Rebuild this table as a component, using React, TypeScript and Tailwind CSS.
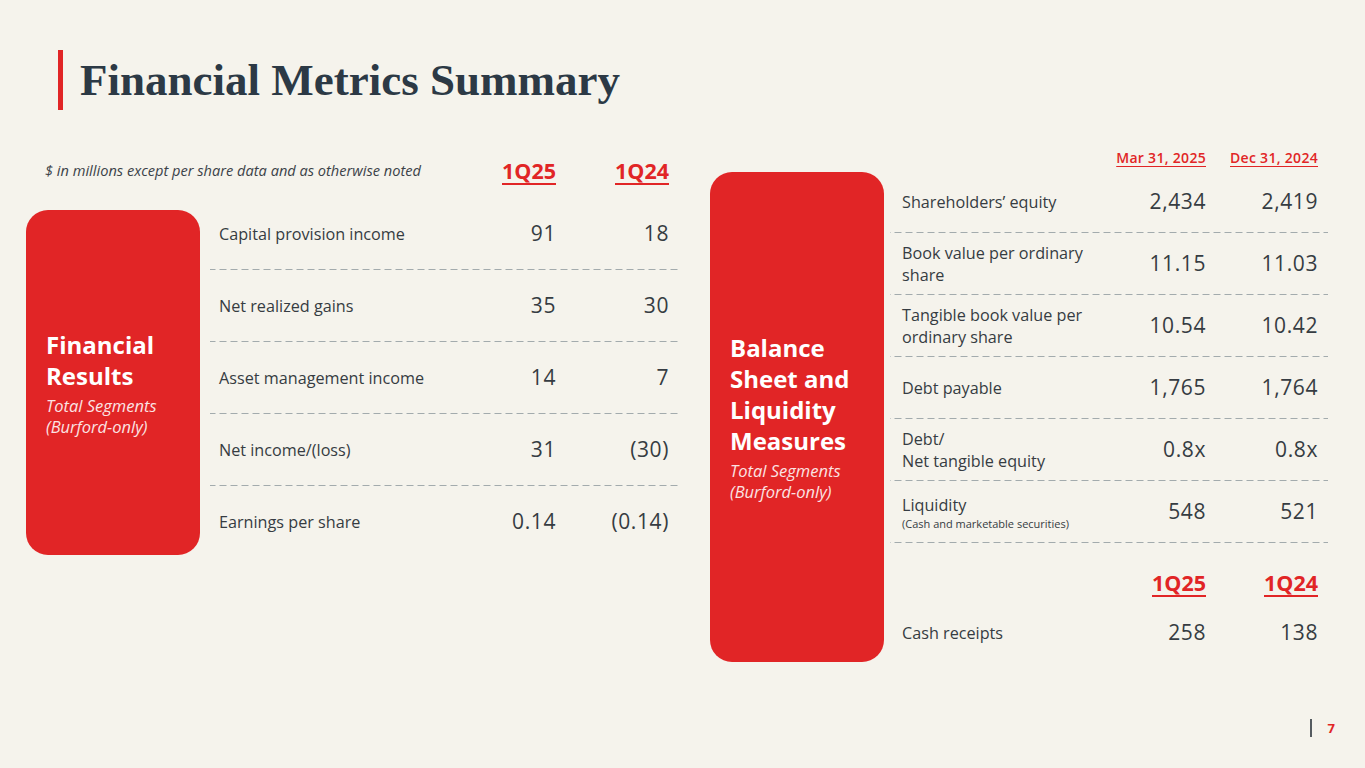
import React from "react";

type Row = { label: React.ReactNode; a: string; b: string };

const results: Row[] = [
  { label: "Capital provision income", a: "91", b: "18" },
  { label: "Net realized gains", a: "35", b: "30" },
  { label: "Asset management income", a: "14", b: "7" },
  { label: "Net income/(loss)", a: "31", b: "(30)" },
  { label: "Earnings per share", a: "0.14", b: "(0.14)" },
];

const balance: Row[] = [
  { label: "Shareholders’ equity", a: "2,434", b: "2,419" },
  { label: <>Book value per ordinary<br />share</>, a: "11.15", b: "11.03" },
  { label: <>Tangible book value per<br />ordinary share</>, a: "10.54", b: "10.42" },
  { label: "Debt payable", a: "1,765", b: "1,764" },
  { label: <>Debt/<br />Net tangible equity</>, a: "0.8x", b: "0.8x" },
  {
    label: (
      <>
        Liquidity
        <span className="block text-[11px] leading-[13px] mt-[1px]">(Cash and marketable securities)</span>
      </>
    ),
    a: "548",
    b: "521",
  },
];

const dash =
  "bg-[linear-gradient(to_right,#a3abad_62%,transparent_0)] bg-[length:11px_1.5px] bg-bottom bg-repeat-x";

const num = "text-right text-[21px] tracking-[0.6px]";
const label = "text-[16.2px] leading-[22px]";

function SideCard({ title, className }: { title: React.ReactNode; className: string }) {
  return (
    <div className={`w-[174px] shrink-0 rounded-[22px] bg-[#e12526] flex flex-col justify-center pl-[20px] text-white ${className}`}>
      <div className="text-[24px] font-bold leading-[31px]">{title}</div>
      <div className="italic text-[16.5px] leading-[21px] mt-[4px] text-[#fbe3e3]">
        Total Segments
        <br />
        (Burford-only)
      </div>
    </div>
  );
}

function PeriodHead({ a, b, small }: { a: string; b: string; small?: boolean }) {
  const cls = small
    ? "text-[14px] font-semibold underline underline-offset-[3px] decoration-[1px] tracking-[0.3px]"
    : "text-[21.5px] font-bold underline underline-offset-[4px] decoration-[2px]";
  return (
    <>
      <div className={`text-right text-[#e12526] ${cls}`}>{a}</div>
      <div className={`text-right text-[#e12526] ${cls}`}>{b}</div>
    </>
  );
}

export default function App() {
  return (
    <div
      className="w-[1365px] h-[768px] bg-[#f5f3ec] text-[#363c42] relative overflow-hidden"
      style={{ fontFamily: "'Open Sans', Lato, sans-serif" }}
    >
      <div className="pl-[58px] pt-[50px] flex items-center h-[110px]">
        <div className="w-[5px] h-[60px] bg-[#e12526]" />
        <h1
          className="ml-[17px] text-[45px] font-bold text-[#2c3945] leading-none"
          style={{ fontFamily: "'Liberation Serif', 'DejaVu Serif', serif" }}
        >
          Financial Metrics Summary
        </h1>
      </div>

      <div className="flex items-start pl-[26px] pt-[34px] gap-[30px]">
        {/* left block */}
        <div className="w-[654px]">
          <div className="h-[54px] grid grid-cols-[1fr_113px_113px] items-center pr-[11px]">
            <div className="italic text-[14.6px] pl-[19px] text-[#3b4248] whitespace-nowrap">
              $ in millions except per share data and as otherwise noted
            </div>
            <PeriodHead a="1Q25" b="1Q24" />
          </div>
          <div className="flex gap-[10px]">
            <SideCard title={<>Financial<br />Results</>} className="h-[345px] mt-[12px]" />
            <div className="flex-1">
              {results.map((r, i) => (
                <div
                  key={i}
                  className={`h-[72px] grid grid-cols-[1fr_113px_113px] items-center pl-[9px] pr-[11px] ${i < results.length - 1 ? dash : ""}`}
                >
                  <div className={label}>{r.label}</div>
                  <div className={num}>{r.a}</div>
                  <div className={num}>{r.b}</div>
                </div>
              ))}
            </div>
          </div>
        </div>

        {/* right block */}
        <div className="w-[618px]">
          <div className="h-[27px] grid grid-cols-[1fr_112px_112px] items-center pr-[10px]">
            <div />
            <PeriodHead a="Mar 31, 2025" b="Dec 31, 2024" small />
          </div>
          <div className="flex gap-[6px]">
            <SideCard
              title={<>Balance<br />Sheet and<br />Liquidity<br />Measures</>}
              className="h-[490px] mt-[1px]"
            />
            <div className="flex-1">
              {balance.map((r, i) => (
                <div
                  key={i}
                  className={`h-[62px] grid grid-cols-[1fr_112px_112px] items-center pl-[12px] pr-[10px] ${dash}`}
                >
                  <div className={label}>{r.label}</div>
                  <div className={num}>{r.a}</div>
                  <div className={num}>{r.b}</div>
                </div>
              ))}
              <div className="h-[60px] mt-[10px] grid grid-cols-[1fr_112px_112px] items-center pr-[10px]">
                <div />
                <PeriodHead a="1Q25" b="1Q24" />
              </div>
              <div className="h-[40px] grid grid-cols-[1fr_112px_112px] items-center pl-[12px] pr-[10px]">
                <div className={label}>Cash receipts</div>
                <div className={num}>258</div>
                <div className={num}>138</div>
              </div>
            </div>
          </div>
        </div>
      </div>

      <div className="absolute right-[30px] bottom-[30px] flex items-center gap-[16px]">
        <div className="w-[2px] h-[18px] bg-[#555b60]" />
        <div className="text-[13px] font-bold text-[#e12526]">7</div>
      </div>
    </div>
  );
}
